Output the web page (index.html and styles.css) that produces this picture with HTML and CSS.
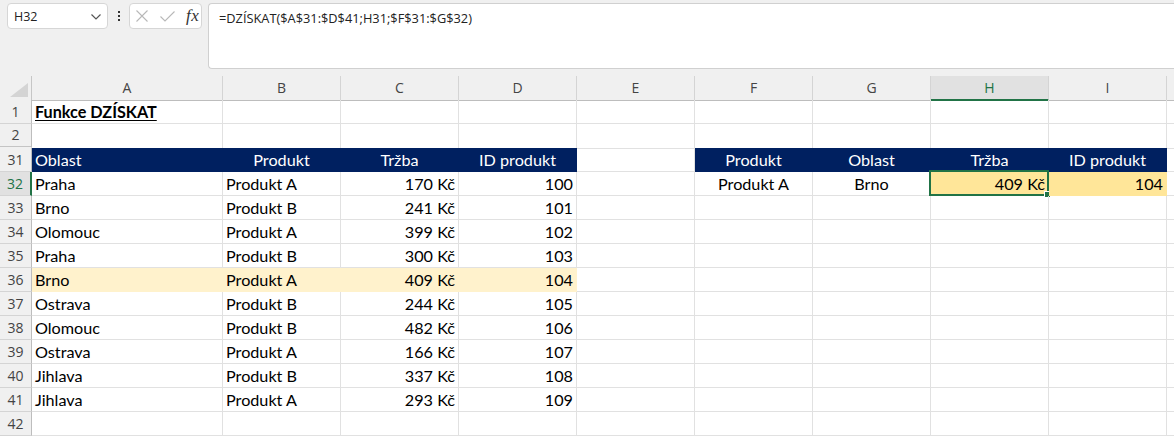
FILE: index.html
```html
<!DOCTYPE html>
<html lang="cs">
<head>
<meta charset="utf-8">
<title>Funkce DZÍSKAT</title>
<link rel="stylesheet" href="styles.css">
</head>
<body>
<div class="top">
  <div class="bar">
    <div class="namebox">
      <span class="nb-text">H32</span>
      <svg class="chev" width="10" height="6" viewBox="0 0 10 6"><polyline points="0.5,0.5 5,5 9.5,0.5" fill="none" stroke="#555" stroke-width="1.2"/></svg>
    </div>
    <div class="vdots"><i></i><i></i><i></i></div>
    <div class="fxbox">
      <svg class="ico" width="12" height="12" viewBox="0 0 12 12"><path d="M0.5 0.5 L11.5 11.5 M11.5 0.5 L0.5 11.5" stroke="#b8b8b8" stroke-width="1.1" fill="none"/></svg>
      <svg class="ico" width="15" height="11" viewBox="0 0 15 11"><polyline points="0.5,5.5 5,10 14.5,0.5" stroke="#b8b8b8" stroke-width="1.1" fill="none"/></svg>
      <span class="fx">fx</span>
    </div>
    <div class="formula">=DZÍSKAT($A$31:$D$41;H31;$F$31:$G$32)</div>
  </div>
  <div class="row colhdr">
    <div class="corner"><svg width="18" height="14" viewBox="0 0 18 14"><polygon points="18,0 18,14 0,14" fill="#d4d4d4"/></svg></div>
    <div class="ch">A</div><div class="ch">B</div><div class="ch">C</div><div class="ch">D</div><div class="ch">E</div><div class="ch">F</div><div class="ch">G</div><div class="ch sel">H</div><div class="ch">I</div><div class="ch last"></div>
  </div>
</div>
<div class="sheet">
  <div class="row"><div class="rh">1</div><div class="c title"><span>Funkce DZÍSKAT</span></div><div class="c"></div><div class="c"></div><div class="c"></div><div class="c"></div><div class="c"></div><div class="c"></div><div class="c"></div><div class="c"></div><div class="c last"></div></div>
  <div class="row"><div class="rh hid">2</div><div class="c"></div><div class="c"></div><div class="c"></div><div class="c"></div><div class="c"></div><div class="c"></div><div class="c"></div><div class="c"></div><div class="c"></div><div class="c last"></div></div>
  <div class="row"><div class="rh">31</div><div class="c nv">Oblast</div><div class="c nv ctr">Produkt</div><div class="c nv ctr">Tržba</div><div class="c nv ctr">ID produkt</div><div class="c"></div><div class="c nv ctr">Produkt</div><div class="c nv ctr">Oblast</div><div class="c nv ctr">Tržba</div><div class="c nv ctr">ID produkt</div><div class="c last"></div></div>
  <div class="row"><div class="rh act">32</div><div class="c">Praha</div><div class="c">Produkt A</div><div class="c r">170 Kč</div><div class="c r">100</div><div class="c"></div><div class="c ctr">Produkt A</div><div class="c ctr">Brno</div><div class="c r hy active">409 Kč<span class="selbox"><span class="handle"></span></span></div><div class="c r hy">104</div><div class="c last"></div></div>
  <div class="row"><div class="rh">33</div><div class="c">Brno</div><div class="c">Produkt B</div><div class="c r">241 Kč</div><div class="c r">101</div><div class="c"></div><div class="c"></div><div class="c"></div><div class="c"></div><div class="c"></div><div class="c last"></div></div>
  <div class="row"><div class="rh">34</div><div class="c">Olomouc</div><div class="c">Produkt A</div><div class="c r">399 Kč</div><div class="c r">102</div><div class="c"></div><div class="c"></div><div class="c"></div><div class="c"></div><div class="c"></div><div class="c last"></div></div>
  <div class="row"><div class="rh">35</div><div class="c">Praha</div><div class="c">Produkt B</div><div class="c r">300 Kč</div><div class="c r">103</div><div class="c"></div><div class="c"></div><div class="c"></div><div class="c"></div><div class="c"></div><div class="c last"></div></div>
  <div class="row"><div class="rh">36</div><div class="c hl">Brno</div><div class="c hl">Produkt A</div><div class="c r hl">409 Kč</div><div class="c r hl">104</div><div class="c"></div><div class="c"></div><div class="c"></div><div class="c"></div><div class="c"></div><div class="c last"></div></div>
  <div class="row"><div class="rh">37</div><div class="c">Ostrava</div><div class="c">Produkt B</div><div class="c r">244 Kč</div><div class="c r">105</div><div class="c"></div><div class="c"></div><div class="c"></div><div class="c"></div><div class="c"></div><div class="c last"></div></div>
  <div class="row"><div class="rh">38</div><div class="c">Olomouc</div><div class="c">Produkt B</div><div class="c r">482 Kč</div><div class="c r">106</div><div class="c"></div><div class="c"></div><div class="c"></div><div class="c"></div><div class="c"></div><div class="c last"></div></div>
  <div class="row"><div class="rh">39</div><div class="c">Ostrava</div><div class="c">Produkt A</div><div class="c r">166 Kč</div><div class="c r">107</div><div class="c"></div><div class="c"></div><div class="c"></div><div class="c"></div><div class="c"></div><div class="c last"></div></div>
  <div class="row"><div class="rh">40</div><div class="c">Jihlava</div><div class="c">Produkt B</div><div class="c r">337 Kč</div><div class="c r">108</div><div class="c"></div><div class="c"></div><div class="c"></div><div class="c"></div><div class="c"></div><div class="c last"></div></div>
  <div class="row"><div class="rh">41</div><div class="c">Jihlava</div><div class="c">Produkt A</div><div class="c r">293 Kč</div><div class="c r">109</div><div class="c"></div><div class="c"></div><div class="c"></div><div class="c"></div><div class="c"></div><div class="c last"></div></div>
  <div class="row"><div class="rh">42</div><div class="c"></div><div class="c"></div><div class="c"></div><div class="c"></div><div class="c"></div><div class="c"></div><div class="c"></div><div class="c"></div><div class="c"></div><div class="c last"></div></div>
</div>
</body>
</html>
```

FILE: styles.css
```css
* { box-sizing: border-box; }
html, body { margin: 0; padding: 0; background: #fff; overflow: hidden; }
body { width: 1174px; height: 436px; font-family: "Open Sans", "Noto Sans", sans-serif; }

.top { background: #f0f0f0; }
.bar {
  display: flex;
  align-items: flex-start;
  padding-top: 3px;
  height: 69px;
}
.namebox {
  margin-left: 7px;
  width: 101px;
  height: 26px;
  background: #fff;
  border: 1px solid #d6d6d6;
  border-radius: 4px;
  display: flex;
  align-items: center;
  justify-content: space-between;
  padding: 0 6px 0 6px;
}
.nb-text { font-size: 12.5px; color: #222; }
.chev { margin-top: 1px; }
.vdots {
  width: 21px;
  height: 26px;
  display: flex;
  flex-direction: column;
  align-items: center;
  justify-content: center;
  gap: 2px;
}
.vdots i { display: block; width: 2px; height: 2px; background: #333; }
.fxbox {
  width: 73px;
  height: 26px;
  background: #fff;
  border: 1px solid #d6d6d6;
  border-radius: 4px;
  display: flex;
  align-items: center;
  padding-left: 6px;
  gap: 12px;
}
.fxbox .ico { flex: none; }
.fx {
  font-family: "Liberation Serif", "DejaVu Serif", serif;
  font-style: italic;
  font-size: 17px;
  color: #333;
  margin-left: -1px;
  letter-spacing: 0.5px;
}
.formula {
  margin-left: 6px;
  flex: 1;
  height: 66px;
  background: #fff;
  border: 1px solid #d0d0d0;
  border-right: none;
  border-radius: 4px 0 0 4px;
  font-size: 12.8px;
  color: #222;
  padding: 5px 0 0 10px;
  line-height: 18px;
}

.row {
  display: grid;
  grid-template-columns: 32px 191px repeat(8, 118px) 1fr;
  height: 24px;
}
.colhdr { margin-top: 7px; }
.corner {
  border-right: 1px solid #c6c6c6;
  border-bottom: 1px solid #bdbdbd;
  display: flex;
  align-items: flex-end;
  justify-content: flex-end;
  padding: 0 3px 3px 0;
}
.ch {
  border-right: 1px solid #d4d4d4;
  border-bottom: 1px solid #bdbdbd;
  text-align: center;
  font-size: 14px;
  color: #444;
  line-height: 23px;
}
.ch.sel {
  background: #e1e1e1;
  color: #217346;
  border-bottom: 2px solid #217346;
}
.ch.last { border-right: none; }

.rh {
  background: #f0f0f0;
  border-right: 1px solid #bdbdbd;
  border-bottom: 1px solid #d4d4d4;
  text-align: center;
  font-size: 14px;
  color: #444;
  line-height: 23px;
}
.rh.hid { border-bottom: 3px double #c4c4c4; line-height: 22px; }
.rh.act {
  background: #e1e1e1;
  color: #217346;
  border-right: 2px solid #217346;
}

.c {
  position: relative;
  border-right: 1px solid #e1e1e1;
  border-bottom: 1px solid #e1e1e1;
  font-family: "Lato", "Open Sans", sans-serif;
  font-size: 16.2px;
  color: #000;
  line-height: 23px;
  padding: 0 3px 0 3px;
  white-space: nowrap;
}
.c.last { border-right: none; }
.c.r { text-align: right; }
.c.ctr { text-align: center; }
.c.title { font-weight: bold; }
.c.title span { text-decoration: underline; text-underline-offset: 2px; }
.c.nv { background: #002060; color: #fff; border-color: #002060; }
.c.hl { background: #fff2cc; border-color: #fff2cc; }
.c.hy { background: #ffe699; border-color: #ffe699; }

.selbox {
  position: absolute;
  left: -2px;
  top: -2px;
  right: -1px;
  bottom: -1px;
  border: 2px solid #217346;
  pointer-events: none;
}
.handle {
  position: absolute;
  right: -4px;
  bottom: -4px;
  width: 7px;
  height: 7px;
  background: #217346;
  border: 1px solid #fff;
}
```
